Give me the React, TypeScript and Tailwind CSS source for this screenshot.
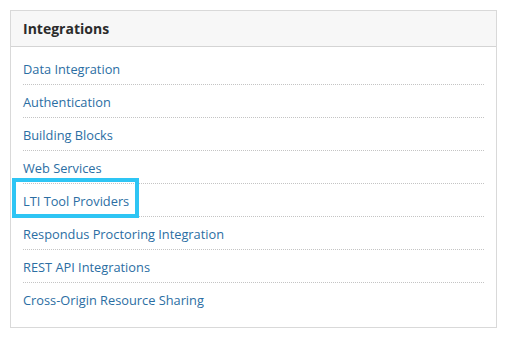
const links = [
  "Data Integration",
  "Authentication",
  "Building Blocks",
  "Web Services",
  "LTI Tool Providers",
  "Respondus Proctoring Integration",
  "REST API Integrations",
  "Cross-Origin Resource Sharing",
];

export default function App() {
  return (
    <div className="h-[339px] w-[508px] bg-white pl-[10px] pt-[10px] font-['Open_Sans',sans-serif]">
      <section className="w-[487px] border border-[#d9d9d9] bg-white">
        <header className="flex h-[36px] items-center border-b border-[#d4d4d4] bg-[#f7f7f7] px-[12px]">
          <h2 className="text-[14px] font-bold text-[#2b2b2b]">Integrations</h2>
        </header>
        <ul className="px-[12px] pb-[11px] pt-[5px]">
          {links.map((label, i) => (
            <li
              key={label}
              className={`relative flex h-[33px] items-center pt-[2px] ${
                i < links.length - 1 ? "border-b border-dotted border-[#c4c4c4]" : ""
              }`}
            >
              {label === "LTI Tool Providers" && (
                <span className="pointer-events-none absolute left-[-11px] top-[-6px] h-[40px] w-[127px] border-4 border-[#2ec5f4]" />
              )}
              <a href="#" className="text-[12.8px] leading-none text-[#2b6ea3]">
                {label}
              </a>
            </li>
          ))}
        </ul>
      </section>
    </div>
  );
}
